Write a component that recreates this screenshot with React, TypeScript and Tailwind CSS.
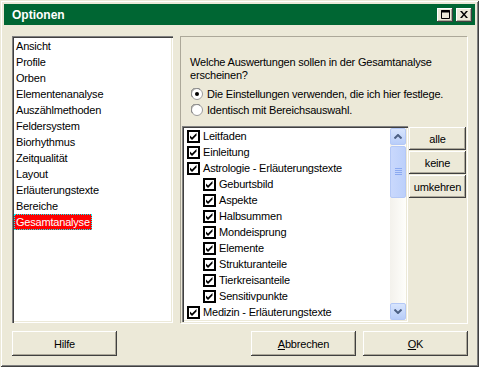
import React from "react";

const leftItems = [
  "Ansicht",
  "Profile",
  "Orben",
  "Elementenanalyse",
  "Auszählmethoden",
  "Feldersystem",
  "Biorhythmus",
  "Zeitqualität",
  "Layout",
  "Erläuterungstexte",
  "Bereiche",
];

const checkItems: { label: string; indent: boolean }[] = [
  { label: "Leitfaden", indent: false },
  { label: "Einleitung", indent: false },
  { label: "Astrologie - Erläuterungstexte", indent: false },
  { label: "Geburtsbild", indent: true },
  { label: "Aspekte", indent: true },
  { label: "Halbsummen", indent: true },
  { label: "Mondeisprung", indent: true },
  { label: "Elemente", indent: true },
  { label: "Strukturanteile", indent: true },
  { label: "Tierkreisanteile", indent: true },
  { label: "Sensitivpunkte", indent: true },
  { label: "Medizin - Erläuterungstexte", indent: false },
];

function CheckBox() {
  return (
    <div className="w-[13px] h-[13px] border-2 border-black bg-white flex items-center justify-center shrink-0">
      <svg width="9" height="9" viewBox="0 0 9 9">
        <path d="M1 3.5 L3 5.5 L7.5 1 L7.5 3.5 L3 8 L1 6 Z" fill="#000" />
      </svg>
    </div>
  );
}

function Btn({ children, className = "" }: { children: React.ReactNode; className?: string }) {
  return (
    <div
      className={
        "bg-[#ECE9D8] flex items-center justify-center text-black shadow-[inset_-1px_-1px_0_#404040,inset_1px_1px_0_#ffffff,inset_-2px_-2px_0_#aca899] " +
        className
      }
    >
      {children}
    </div>
  );
}

function Radio({ checked }: { checked: boolean }) {
  return (
    <svg width="12" height="12" viewBox="0 0 12 12" className="shrink-0">
      <circle cx="6" cy="6" r="5.5" fill="#fff" stroke="#9a9a9a" />
      <path d="M1.5 9 A5 5 0 0 1 9 1.5" stroke="#808080" fill="none" />
      {checked && <circle cx="6" cy="6" r="2" fill="#000" />}
    </svg>
  );
}

export default function App() {
  return (
    <div
      className="w-[479px] h-[367px] bg-[#ECE9D8] p-[4px] flex flex-col text-[11px] leading-[16px] tracking-[-0.2px] text-black shadow-[inset_1px_1px_0_#ECE9D8,inset_-1px_-1px_0_#404040,inset_2px_2px_0_#ffffff,inset_-2px_-2px_0_#808080]"
      style={{ fontFamily: '"Liberation Sans", Arial, sans-serif' }}
    >
      {/* Title bar */}
      <div className="h-[21px] bg-[#006633] flex items-center pl-[8px] pr-[3px] shrink-0">
        <span className="text-white font-bold text-[12px] tracking-normal flex-1">Optionen</span>
        <div className="flex gap-[3px]">
          <Btn className="w-[16px] h-[14px]">
            <svg width="9" height="9" viewBox="0 0 9 9">
              <path d="M0.5 0.5 H8.5 V8.5 H0.5 Z" stroke="#000" fill="none" />
              <path d="M0 1.5 H9" stroke="#000" strokeWidth="2" />
            </svg>
          </Btn>
          <Btn className="w-[16px] h-[14px]">
            <svg width="8" height="7" viewBox="0 0 8 7">
              <path d="M0 0 H2 L4 2.5 L6 0 H8 L5 3.5 L8 7 H6 L4 4.5 L2 7 H0 L3 3.5 Z" fill="#000" />
            </svg>
          </Btn>
        </div>
      </div>

      {/* Body */}
      <div className="flex mt-[11px] ml-[8px] gap-[7px]">
        {/* Left list */}
        <div className="w-[161px] h-[287px] bg-white shadow-[inset_1px_1px_0_#808080,inset_2px_2px_0_#404040,inset_-1px_-1px_0_#ffffff,inset_-2px_-2px_0_#ECE9D8] pt-[2px] pl-[2px]">
          <div>
            {leftItems.map((t) => (
              <div key={t} className="h-[16px] pl-[2px] whitespace-nowrap">
                {t}
              </div>
            ))}
            <div className="h-[16px] inline-block bg-[#ff0000] text-white px-[1px] border border-dotted border-[#00ffff] leading-[14px]">
              Gesamtanalyse
            </div>
          </div>
        </div>

        {/* Right panel */}
        <div className="w-[287px] h-[287px] border-t border-l border-[#aca899] shadow-[1px_1px_0_#ffffff] pl-[9px] pt-[19px]">
          <div className="leading-[13px] w-[270px]">
            Welche Auswertungen sollen in der Gesamtanalyse erscheinen?
          </div>
          <div className="mt-[3px] ml-[1px] flex flex-col">
            <div className="flex items-center gap-[4px] h-[17px]">
              <Radio checked />
              <span>Die Einstellungen verwenden, die ich hier festlege.</span>
            </div>
            <div className="flex items-center gap-[4px] h-[16px]">
              <Radio checked={false} />
              <span>Identisch mit Bereichsauswahl.</span>
            </div>
          </div>

          <div className="flex mt-[8px] -ml-[8px] gap-[1px]">
            {/* Check list */}
            <div className="w-[226px] h-[196px] bg-white flex shadow-[inset_1px_1px_0_#808080,inset_2px_2px_0_#404040,inset_-1px_-1px_0_#ffffff,inset_-2px_-2px_0_#ECE9D8] p-[2px]">
              <div className="flex-1 flex flex-col">
                {checkItems.map((it) => (
                  <div
                    key={it.label}
                    className={
                      "h-[16px] flex items-center gap-[3px] whitespace-nowrap " +
                      (it.indent ? "pl-[19px]" : "pl-[3px]")
                    }
                  >
                    <CheckBox />
                    <span>{it.label}</span>
                  </div>
                ))}
              </div>
              {/* Scrollbar */}
              <div className="w-[16px] h-[192px] flex flex-col bg-gradient-to-r from-[#f3f1ec] to-[#fefefb]">
                <div className="h-[17px] rounded-[2px] border border-[#b4c8f6] bg-gradient-to-b from-[#d8e5fd] to-[#b8cdf9] flex items-center justify-center">
                  <svg width="8" height="5" viewBox="0 0 8 5">
                    <path d="M0.5 4.5 L4 1 L7.5 4.5" stroke="#4d6185" strokeWidth="2" fill="none" />
                  </svg>
                </div>
                <div className="h-[52px] mt-[1px] rounded-[2px] border border-[#b4c8f6] bg-gradient-to-r from-[#c9d8fc] to-[#bcd0fb] flex items-center justify-center">
                  <svg width="7" height="8" viewBox="0 0 7 8">
                    <path d="M0 0.5 H7 M0 2.5 H7 M0 4.5 H7 M0 6.5 H7" stroke="#8caaf0" />
                  </svg>
                </div>
                <div className="flex-1" />
                <div className="h-[17px] rounded-[2px] border border-[#b4c8f6] bg-gradient-to-b from-[#d8e5fd] to-[#b8cdf9] flex items-center justify-center">
                  <svg width="8" height="5" viewBox="0 0 8 5">
                    <path d="M0.5 0.5 L4 4 L7.5 0.5" stroke="#4d6185" strokeWidth="2" fill="none" />
                  </svg>
                </div>
              </div>
            </div>

            {/* Side buttons */}
            <div className="flex flex-col gap-[1px] pt-[1px]">
              <Btn className="w-[57px] h-[23px]">alle</Btn>
              <Btn className="w-[57px] h-[23px]">keine</Btn>
              <Btn className="w-[57px] h-[23px]">umkehren</Btn>
            </div>
          </div>
        </div>
      </div>

      {/* Bottom buttons */}
      <div className="flex ml-[8px] mt-[8px]">
        <Btn className="w-[105px] h-[25px]">Hilfe</Btn>
        <div className="flex-1" />
        <Btn className="w-[105px] h-[25px]">
          <span>
            <u>A</u>bbrechen
          </span>
        </Btn>
        <Btn className="w-[105px] h-[25px] ml-[7px] mr-[7px]">
          <span>
            <u>O</u>K
          </span>
        </Btn>
      </div>
    </div>
  );
}
